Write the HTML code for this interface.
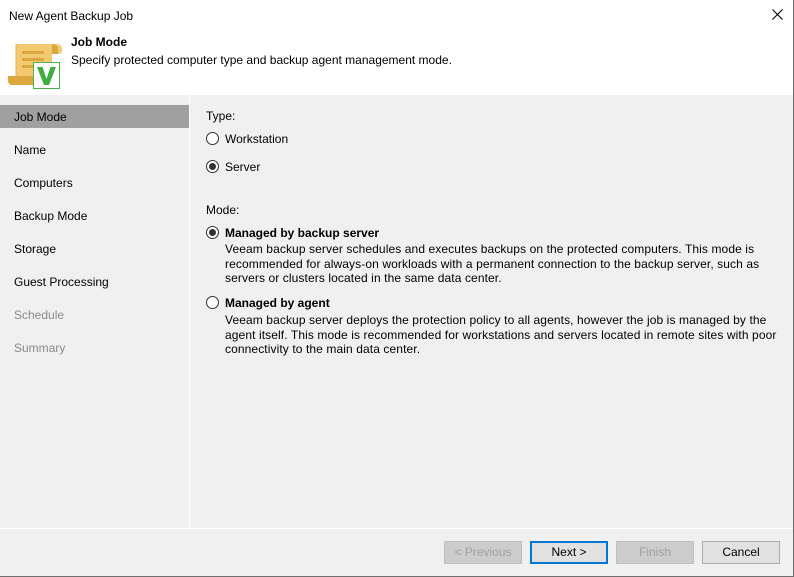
<!DOCTYPE html>
<html><head><style>
*{margin:0;padding:0;box-sizing:border-box}
body{width:794px;height:577px;background:#f0f0f0;font-family:"Liberation Sans",sans-serif;font-size:12px;color:#000;position:relative;overflow:hidden}
.a{position:absolute;white-space:nowrap}
.win{position:absolute;left:0;top:0;width:794px;height:577px;border-right:1px solid #6f6f6f;border-bottom:1px solid #6f6f6f}
.nav{font-size:12px}
.rad{position:absolute;width:13px;height:13px;border:1px solid #333;border-radius:50%;background:#fff}
.rad.on::after{content:"";position:absolute;left:2px;top:2px;width:7px;height:7px;border-radius:50%;background:#333}
.btn{position:absolute;top:541px;width:78px;height:23px;border:1px solid #adadad;background:#e1e1e1;text-align:center;line-height:21px}
.dis{color:#a0a0a0;background:#cccccc;border-color:#bfbfbf}
.desc{font-size:12px;line-height:14.5px;letter-spacing:0.1px}
</style></head><body>
<div class="a" style="left:0;top:0;width:793px;height:95px;background:#fff"></div>
<div class="a" style="left:9px;top:9px;font-size:12px">New Agent Backup Job</div>
<svg class="a" style="left:772px;top:9px" width="11" height="11"><path d="M0.5 0.5L10.5 10.5M10.5 0.5L0.5 10.5" stroke="#000" stroke-width="1.1"/></svg>
<svg class="a" style="left:6px;top:40px" width="56" height="52" viewBox="0 0 56 52">
<path d="M10 4 H50 Q56 4 56 10 Q56 14 52 14 H46 V38 H10 Z" fill="#f2c96e"/>
<path d="M46 4 Q52 4 52 10 V14 H46Z" fill="#dba840"/>
<path d="M2 36 H44 V45 H6 Q1 45 2 36Z" fill="#dba840"/>
<path d="M10 4 V38" stroke="#e0b450" stroke-width="1"/>
<rect x="16" y="11" width="22" height="3" fill="#dba840"/>
<rect x="16" y="18" width="22" height="3" fill="#dba840"/>
<rect x="16" y="25" width="18" height="3" fill="#dba840"/>
<rect x="27.5" y="22.5" width="26" height="26" fill="#fff" stroke="#4cb04c" stroke-width="1"/>
<path d="M31 27 H36.5 L40.5 39 L44.5 27 H50 L43 45 H38Z" fill="#3fae3f"/>
</svg>
<div class="a" style="left:71px;top:35px;font-weight:bold">Job Mode</div>
<div class="a" style="left:71px;top:53px">Specify protected computer type and backup agent management mode.</div>
<div class="a" style="left:189px;top:95px;width:1px;height:433px;background:#fff"></div>
<div class="a" style="left:0;top:105px;width:189px;height:23px;background:#a0a0a0"></div>
<div class="a nav" style="left:14px;top:110px">Job Mode</div>
<div class="a nav" style="left:14px;top:143px">Name</div>
<div class="a nav" style="left:14px;top:176px">Computers</div>
<div class="a nav" style="left:14px;top:209px">Backup Mode</div>
<div class="a nav" style="left:14px;top:242px">Storage</div>
<div class="a nav" style="left:14px;top:275px">Guest Processing</div>
<div class="a nav" style="left:14px;top:308px;color:#8a8a8a">Schedule</div>
<div class="a nav" style="left:14px;top:341px;color:#8a8a8a">Summary</div>
<div class="a" style="left:206px;top:109px">Type:</div>
<div class="rad" style="left:206px;top:132px"></div><div class="a" style="left:225px;top:132px">Workstation</div>
<div class="rad on" style="left:206px;top:160px"></div><div class="a" style="left:225px;top:160px">Server</div>
<div class="a" style="left:206px;top:203px">Mode:</div>
<div class="rad on" style="left:206px;top:226px"></div><div class="a" style="left:225px;top:226px;font-weight:bold">Managed by backup server</div>
<div class="a desc" style="left:225px;top:242px">Veeam backup server schedules and executes backups on the protected computers. This mode is<br>recommended for always-on workloads with a permanent connection to the backup server, such as<br>servers or clusters located in the same data center.</div>
<div class="rad" style="left:206px;top:296px"></div><div class="a" style="left:225px;top:296px;font-weight:bold">Managed by agent</div>
<div class="a desc" style="left:225px;top:313px">Veeam backup server deploys the protection policy to all agents, however the job is managed by the<br>agent itself. This mode is recommended for workstations and servers located in remote sites with poor<br>connectivity to the main data center.</div>
<div class="a" style="left:0;top:528px;width:793px;height:1px;background:#fff"></div>
<div class="btn dis" style="left:444px">&lt; Previous</div>
<div class="btn" style="left:530px;border:2px solid #0078d7;line-height:19px">Next &gt;</div>
<div class="btn dis" style="left:616px">Finish</div>
<div class="btn" style="left:702px">Cancel</div>
<div class="win"></div>
</body></html>
